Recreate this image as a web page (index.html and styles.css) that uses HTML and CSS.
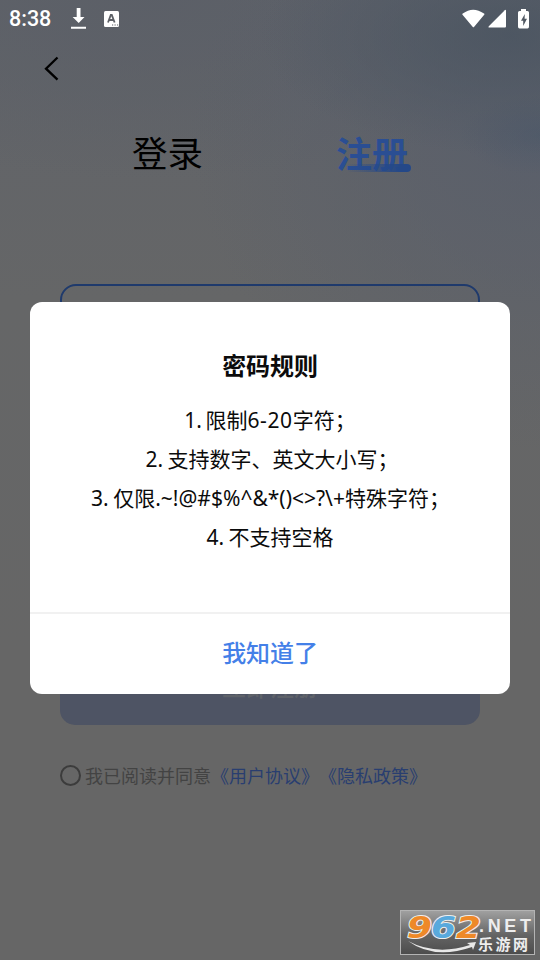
FILE: index.html
```html
<!DOCTYPE html>
<html lang="zh-CN">
<head>
<meta charset="utf-8">
<title>注册</title>
<link rel="stylesheet" href="styles.css">
</head>
<body>
<main class="screen">
  <header class="status">
    <span class="clock">8:38</span>
    <svg class="download" width="16" height="22" viewBox="0 0 16 22"><path d="M5.7 0h3.8v9h4L7.7 15 1.6 9h4.1zM0 18.8h15v2H0z"/></svg>
    <svg class="letter" width="16" height="16" viewBox="0 0 16 16"><rect width="15" height="16" rx="1.5"/><path class="mark" d="M4 11.500 6.800 4h1l2.800 7.500M5 9h4.500" /><path class="dots" d="M8 14h1.200M10.500 14h1.200M13 14h1.200"/></svg>
    <span class="grow"></span>
    <svg width="23" height="20" viewBox="0 0 23 20"><path d="M.8 4.500Q11-3.200 22 4.500q.8.500.2 1.200L12 18q-.6.700-1.200 0L.5 5.700Q0 5 .8 4.500Z"/></svg>
    <svg class="signal" width="19" height="20" viewBox="0 0 19 20"><path d="M18 1.500V17.500q0 1-1 1H1q-1-.2-.4-1L16.800 1.200q1.200-.8 1.200.3Z"/></svg>
    <svg class="battery" width="12" height="20" viewBox="0 0 12 20"><path d="M3 0h5v2h1.500Q11 2 11 3.500v14Q11 19.500 9.500 19.500h-8Q0 19.500 0 17.500v-14Q0 2 1.500 2H3z"/><path class="bolt" d="M6.800 4.900 3 11.800h2.200v5.300l3.800-7.300H6.600z"/></svg>
  </header>
  <nav class="back"><svg width="16" height="26" viewBox="0 0 16 26"><path d="M13.500 1.500 2 12.700l11.500 11"/></svg></nav>
  <div class="tabs">
    <span class="tab">登录</span>
    <span class="tab active">注册</span>
  </div>
  <div class="field"></div>
  <div class="submit">立即注册</div>
  <div class="agree"><i class="radio"></i><span>我已阅读并同意</span><a class="terms">《用户协议》</a><a class="privacy">《隐私政策》</a></div>
  <section class="dialog">
    <h2>密码规则</h2>
    <div class="rules">
      <p class="length">1. 限制<span class="range">6-20</span>字符；</p>
      <p class="kinds">2. 支持数字、英文大小写；</p>
      <p class="special">3. 仅限.~!@#$%^&amp;*()&lt;&gt;?\+特殊字符；</p>
      <p>4. 不支持空格</p>
    </div>
    <div class="confirm">我知道了</div>
  </section>
  <svg class="brand" width="135" height="45" viewBox="0 0 135 45">
    <defs><linearGradient id="plate" x2="0" y2="1"><stop stop-color="#a1a1a1"/><stop offset=".55" stop-color="#656565"/><stop offset="1" stop-color="#4c4c4c"/></linearGradient></defs>
    <rect class="plate" x=".5" y=".5" width="134" height="44"/>
    <g class="number"><text class="orange" x="7" y="28" textLength="25" lengthAdjust="spacingAndGlyphs">9</text><text class="blue" x="31" y="28" textLength="25" lengthAdjust="spacingAndGlyphs">6</text><text class="orange" x="56" y="28" textLength="25" lengthAdjust="spacingAndGlyphs">2</text></g>
    <path class="smile" d="M8 31Q36 46 70 35l-3-2 9-1-3 8-1-3Q34 50 8 31"/>
    <text class="net" x="79" y="21.500" textLength="52">.NET</text>
    <text class="site" x="78" y="40" textLength="50">乐游网</text>
  </svg>
</main>
</body>
</html>
```
FILE: styles.css
```css
* { box-sizing: border-box; }
body { margin: 0; }
.screen {
  position: relative;
  width: 540px;
  height: 960px;
  overflow: hidden;
  font-family: "Noto Sans", "Noto Sans CJK SC", sans-serif;
  background:
    radial-gradient(ellipse 80px 40px at 540px 135px, rgba(70, 85, 104, .4), transparent),
    radial-gradient(ellipse 250px 120px at 510px 35px, rgba(75, 85, 97, .85), transparent),
    radial-gradient(ellipse 350px 320px at 540px 130px, rgba(88, 94, 107, .85), transparent),
    radial-gradient(ellipse 420px 180px at 150px 0, rgba(91, 95, 103, .9), transparent),
    linear-gradient(#606369, #656667 300px, #666 650px);
}
.status { display: flex; height: 38px; padding: 0 10px 0 9px; align-items: center; fill: #fff; }
.clock { width: 61px; color: #fff; font: 500 21.500px/38px Roboto, sans-serif; }
.download { margin: 0 17px 1px 1px; }
.mark { fill: none; stroke: #5d6066; stroke-width: 1.800; }
.dots { fill: none; stroke: #5d6066; stroke-width: 1.200; }
.grow { flex: 1; }
.signal { margin: 0 11px 0 3px; }
.bolt { fill: #515963; }
.back { height: 60px; padding: 18px 0 0 44px; }
.back svg { display: block; fill: none; stroke: #000; stroke-width: 2.300; }
.tabs { display: grid; grid-template-columns: 70px 74px; gap: 134px; height: 186px; padding: 28px 0 0 132px; }
.tab { height: 52px; color: #000; font: 35.500px/52px "Noto Sans CJK SC", sans-serif; white-space: nowrap; }
.active { position: relative; color: #2a4e93; font-weight: 700; font-size: 36px; }
.active::after {
  content: ""; position: absolute; left: 10px; right: -1px; bottom: 6px;
  height: 8px; border-radius: 4px; background: linear-gradient(90deg, transparent, #244888 85%);
}
.field { height: 90px; margin: 0 60px; border: 2px solid #1f3a6c; border-radius: 16px; }
.submit {
  height: 70px; margin: 281px 60px 0; border-radius: 15px; background: #4e5464;
  color: #5e6269; font: 500 24px/61px "Noto Sans CJK SC", sans-serif; text-align: center;
}
.agree {
  display: flex; height: 30px; margin: 35px 0 0 60px; align-items: center;
  color: #434343; font: 18px/30px "Noto Sans CJK SC", sans-serif; white-space: nowrap;
}
.radio { width: 21px; height: 21px; margin-right: 4px; border: 2px solid #3c3c3c; border-radius: 50%; }
.agree a { color: #293e70; }
.dialog {
  position: absolute; left: 30px; top: 302px; width: 480px; height: 392px;
  border-radius: 12px; background: #fff; text-align: center; color: #0b0b0b;
}
.dialog h2 { height: 36px; margin: 45px 0 18px; font: 700 24px/36px "Noto Sans CJK SC", sans-serif; letter-spacing: -.1px; }
.rules { height: 211px; font-size: 21px; line-height: 39px; white-space: nowrap; word-spacing: -1px; }
.rules p { height: 39px; margin: 0; }
.length { word-spacing: -2px; }
.range { letter-spacing: .6px; }
.rules .kinds { margin-right: -4px; }
.rules .special { margin-right: -1px; }
.confirm {
  height: 82px; border-top: 2px solid #f1f1f1; color: #4480e8;
  font: 500 24px/76px "Noto Sans CJK SC", sans-serif; letter-spacing: -.1px;
}
.brand { position: absolute; left: 400px; top: 910px; overflow: visible; }
.plate { fill: url(#plate); stroke: #b4b4b4; }
.number { font: italic 700 31px "DejaVu Sans", sans-serif; paint-order: stroke; stroke: #eee; stroke-width: 2; }
.orange { fill: #ee8928; }
.blue { fill: #59a9dc; }
.smile { fill: #e8e8e8; }
.net { font: 700 18px "Liberation Sans", sans-serif; fill: #eee; }
.site { font: 700 15px "Noto Sans CJK SC", sans-serif; fill: #eee; }
```
